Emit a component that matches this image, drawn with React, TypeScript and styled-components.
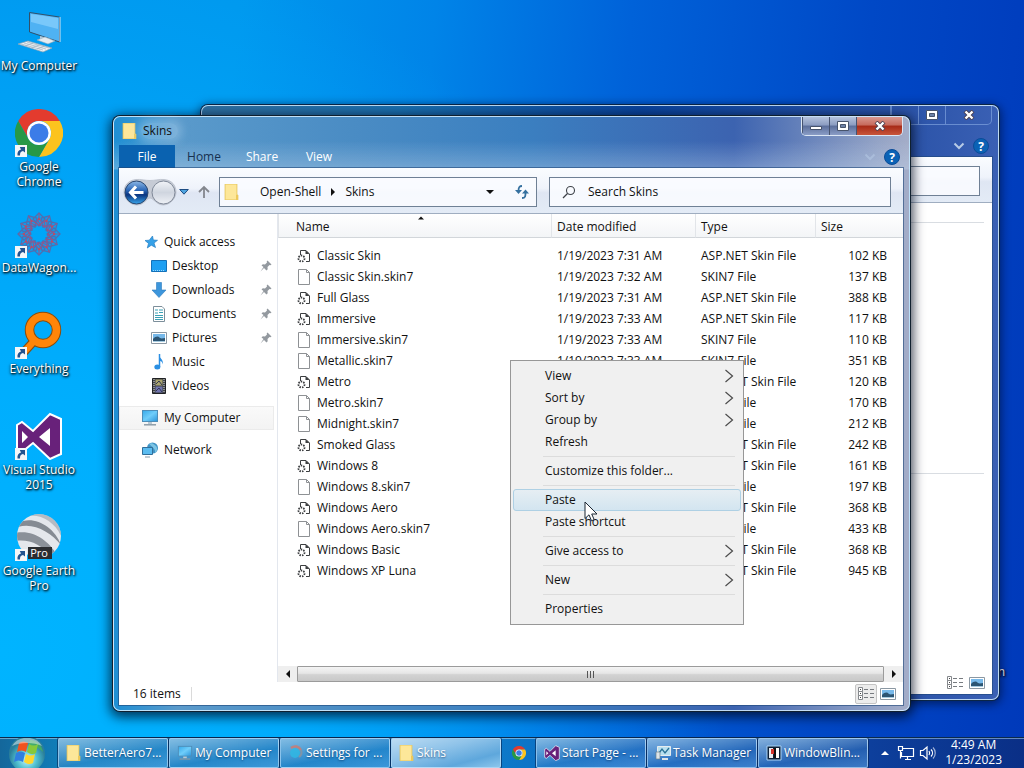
import * as React from "react";
import styled, { createGlobalStyle, css } from "styled-components";

const files = [
    ["Classic Skin", "1/19/2023 7:31 AM", "102 KB"],
    ["Classic Skin.skin7", "1/19/2023 7:32 AM", "137 KB"],
    ["Full Glass", "1/19/2023 7:31 AM", "388 KB"],
    ["Immersive", "1/19/2023 7:33 AM", "117 KB"],
    ["Immersive.skin7", "1/19/2023 7:33 AM", "110 KB"],
    ["Metallic.skin7", "1/19/2023 7:33 AM", "351 KB"],
    ["Metro", "1/19/2023 7:33 AM", "120 KB"],
    ["Metro.skin7", "1/19/2023 7:33 AM", "170 KB"],
    ["Midnight.skin7", "1/19/2023 7:33 AM", "212 KB"],
    ["Smoked Glass", "1/19/2023 7:33 AM", "242 KB"],
    ["Windows 8", "1/19/2023 7:33 AM", "161 KB"],
    ["Windows 8.skin7", "1/19/2023 7:33 AM", "197 KB"],
    ["Windows Aero", "1/19/2023 7:33 AM", "368 KB"],
    ["Windows Aero.skin7", "1/19/2023 7:33 AM", "433 KB"],
    ["Windows Basic", "1/19/2023 7:33 AM", "368 KB"],
    ["Windows XP Luna", "1/19/2023 7:33 AM", "945 KB"],
];

const menuGroups = [
    [["View", true], ["Sort by", true], ["Group by", true], ["Refresh", false]],
    [["Customize this folder...", false]],
    [["Paste", false], ["Paste shortcut", false]],
    [["Give access to", true]],
    [["New", true]],
    [["Properties", false]],
] as [string, boolean][][];

/* ---------- icons ---------- */

const FolderIcon = ({ size = 16 }) => (
    <svg width={size} height={size} viewBox="0 0 16 16">
        <path d="M1 0h12v11h1v5H1z" fill="#fbe28a" stroke="#e3c25c" strokeWidth=".7" />
        <path d="M2 1h10v14H2z" fill="#fde799" />
        <path d="M12 11h2v5h-2z" fill="#edc95a" />
    </svg>
);

const ComputerIcon = ({ size = 18 }) => (
    <svg width={size} height={size} viewBox="0 0 18 18">
        <defs>
            <linearGradient id="screen" x1="0" y1="0" x2="1" y2="1">
                <stop offset="0" stopColor="#35a9ea" />
                <stop offset=".5" stopColor="#6fcdfa" />
                <stop offset="1" stopColor="#2b94da" />
            </linearGradient>
        </defs>
        <rect x="1.500" y="1.500" width="15" height="11" fill="url(#screen)" stroke="#4d8db8" />
        <path d="M7 13h4v2H7z" fill="#b9c8d3" />
        <path d="M3 15.800h12" stroke="#8797a3" strokeWidth="1.400" />
    </svg>
);

const DesktopComputerIcon = () => (
    <svg width="48" height="48" viewBox="0 0 48 48">
        <path d="M14.500 4.500 44.500 9v25L14.500 24z" fill="#4fb2f3" stroke="#31506a" />
        <path d="M16 6 43 10v11L16 14z" fill="#83cdfb" opacity=".8" />
        <path d="M45 9v25" stroke="#d6e6f2" strokeWidth="1" />
        <path d="M25 28v4l8 3 3-4z" fill="#b8ccd9" />
        <path d="M22 32l8-3 10 4-7 3z" fill="#e5ecf1" stroke="#8ba6b9" strokeWidth=".6" />
        <path d="M3 36l10-3 24 7-9 4z" fill="#edf1f4" stroke="#8aa4b6" strokeWidth=".7" />
        <path d="M6 36l22 6M9 35l22 6M12 34l22 6M10 38l8-3M16 40l8-3M22 41l8-3" stroke="#9fb2c0" strokeWidth=".7" />
    </svg>
);

const ChromeIcon = ({ size = 48 }) => (
    <svg width={size} height={size} viewBox="0 0 48 48">
        <path d="M3.200 12A24 24 0 0 1 44.800 12H24A12 12 0 0 0 13.600 30z" fill="#e33b2e" />
        <path d="M44.800 12A24 24 0 0 1 24 48L34.400 30A12 12 0 0 0 24 12z" fill="#fcc31e" />
        <path d="M24 48A24 24 0 0 1 3.200 12L13.600 30A12 12 0 0 0 34.400 30z" fill="#279847" />
        <circle cx="24" cy="24" r="12" fill="#fff" />
        <circle cx="24" cy="24" r="9.500" fill="#3b7ce8" />
    </svg>
);

const DataWagonIcon = () => (
    <svg width="48" height="48" viewBox="0 0 48 48" fill="none">
        {[0, 30, 60, 90, 120, 150, 180, 210, 240, 270, 300, 330].map((a) => (
            <g key={a} transform={`rotate(${a} 24 24)`}>
                <path d="M24 16 18 9l6-6 6 6z" stroke="#4f6fb0" strokeWidth="1.300" />
                <path d="M19 17l5-9 5 9M24 3v5M14 12l8 4" stroke="#8a5a90" strokeWidth="1.200" />
                <circle cx="24" cy="9" r="1.200" fill="#b84c66" />
            </g>
        ))}
    </svg>
);

const EverythingIcon = () => (
    <svg width="48" height="48" viewBox="0 0 48 48" fill="none">
        <path d="M20 29 9 41" stroke="#8a4d0c" strokeWidth="9" />
        <circle cx="28" cy="19" r="13.500" stroke="#8a4d0c" strokeWidth="9.500" />
        <path d="M21 28 9 41" stroke="#ff8508" strokeWidth="6.500" />
        <circle cx="28" cy="19" r="13.500" stroke="#ff8508" strokeWidth="7.500" />
    </svg>
);

const VisualStudioIcon = ({ size = 48 }) => (
    <svg width={size} height={size} viewBox="0 0 48 48">
        <path
            d="M2 13 7 10l11 9L35 2l11 5v35l-11 5-17-16-11 9-5-3z"
            fill="#68217a"
            stroke="#fff"
            strokeWidth="2"
        />
        <path d="M7 19v12l6-6zM24 25l11-9v18z" fill="#fff" />
    </svg>
);

const EarthIcon = () => (
    <svg width="48" height="48" viewBox="0 0 48 48">
        <defs>
            <clipPath id="globe"><circle cx="24" cy="23" r="22" /></clipPath>
        </defs>
        <g clipPath="url(#globe)">
            <path d="M0 0h48v48H0z" fill="#e4e7ec" />
            <path d="M8 5C22-2 42 8 48 28V14C42 4 30-2 14 0z" fill="#9a9fa6" opacity=".6" />
            <path d="M3 10C18 2 39 13 46 32 36 19 18 9 3 14z" fill="#858b93" />
            <path d="M0 20C18 16 34 28 42 42l-6 3C27 31 14 26 0 28z" fill="#8b9199" />
        </g>
        <path d="M13 34h24v12H13z" fill="#2b2d31" />
        <text x="24" y="44" fill="#fff" fontSize="11" textAnchor="middle" fontFamily="Open Sans, sans-serif">Pro</text>
    </svg>
);

const ShortcutArrow = () => (
    <svg width="12" height="12" viewBox="0 0 12 12">
        <path d="M0 0h12v12H0z" fill="#f4f6f8" />
        <path d="M2.500 10.500C2 7 3.500 4.800 6 4.400L4.800 2H10v5.500L8 6C6 6.300 4.800 7.800 5 10.500z" fill="#23538f" />
    </svg>
);

const StarIcon = () => (
    <svg width="16" height="16" viewBox="0 0 16 16">
        <path d="M9.500 2l.8 4 4.200.3-3.500 2.700 1.500 4.500-4.200-2.300-4 2.800 1.200-4.600L2 6.500l4.300-.3z" fill="#35a1e8" stroke="#2680c4" strokeWidth=".7" />
    </svg>
);

const DesktopIcon = () => (
    <svg width="16" height="16" viewBox="0 0 16 16">
        <path d="M.5 2.500h15v11H.5z" fill="#1d9ff2" stroke="#1471b8" />
        <path d="M2 12.500h12" stroke="#9fd6fa" strokeDasharray="1 1" />
    </svg>
);

const DownloadIcon = () => (
    <svg width="16" height="16" viewBox="0 0 16 16">
        <path d="M5.500.5h5V8H15L8 15.500 1 8h4.500z" fill="#3d96dc" stroke="#2c7bbd" strokeWidth=".6" />
    </svg>
);

const DocumentIcon = () => (
    <svg width="16" height="16" viewBox="0 0 16 16">
        <path d="M2.500.5h8.500l2.500 2.500v12.500h-11z" fill="#fff" stroke="#7d8f9b" />
        <path d="M4 4h3M4 7h3M8 4h4M8 6.500h4M4 9.500h8M4 11.500h8M4 13.500h8" stroke="#3ba0b5" />
    </svg>
);

const PictureIcon = () => (
    <svg width="16" height="14" viewBox="0 0 16 14">
        <path d="M.5 1.500h15v11H.5z" fill="#fff" stroke="#8b98a3" />
        <path d="M2 3h12v8H2z" fill="#77b9ea" />
        <path d="M2 8c3-3 5-3 7-1 2 1 3 0 5 0v4H2z" fill="#2c5573" />
        <path d="M2 10h12v1H2z" fill="#a6cbe0" />
    </svg>
);

const MusicIcon = () => (
    <svg width="16" height="16" viewBox="0 0 16 16">
        <path d="M8 1c0 3 4.500 4 4 9.500C11.500 8 10 7 9 7v6" fill="#2b8fe3" />
        <path d="M8.500 0v13" stroke="#2b8fe3" strokeWidth="1.500" />
        <ellipse cx="6.300" cy="13" rx="3" ry="2.500" fill="#2b8fe3" />
    </svg>
);

const VideoIcon = () => (
    <svg width="16" height="16" viewBox="0 0 16 16">
        <path d="M1.500.5h13v15h-13z" fill="#3f4247" stroke="#1f2124" />
        <path d="M4.500 1.500h7v6h-7z" fill="#a8a36e" />
        <path d="M4.500 8.500h7v6h-7z" fill="#6f73ad" />
        <path d="M5 6l3-3 3 4M5 13l3-3 3 4" stroke="#303550" fill="none" />
        <path d="M3 1v14M13 1v14" stroke="#d8dade" strokeDasharray="1 1" />
    </svg>
);

const NetworkIcon = () => (
    <svg width="18" height="18" viewBox="0 0 18 18">
        <circle cx="11.500" cy="7" r="5.500" fill="#3f93c5" />
        <path d="M8 3c3-2 5 0 7 2s1 6-1 7c1-4-3-6-6-9z" fill="#7cc4e4" />
        <path d="M1.500 6.500h10v7h-10z" fill="#5bbcf0" stroke="#316f9a" />
        <path d="M4 16h5" stroke="#8499a8" />
    </svg>
);

const PinIcon = () => (
    <svg width="12" height="12" viewBox="0 0 12 12">
        <path d="M7.500.5l4 4-1 .8-1-.3-2 2 .2 2.200-1.200 1.300L4 8 .5 11.500 3.500 7 1.500 5.500l1.300-1.200 2.200.2 2-2-.3-1z" fill="#93999f" />
    </svg>
);

const BlankFileIcon = () => (
    <svg width="14" height="16" viewBox="0 0 14 16">
        <path d="M1.500.5h8l3 3v12h-11z" fill="#fff" stroke="#8e9194" />
        <path d="M9.500.5v3h3" fill="none" stroke="#8e9194" />
    </svg>
);

const SkinFileIcon = () => (
    <svg width="14" height="14" viewBox="0 0 14 14" fill="none">
        <path d="M3.500 6V1.500H9l3.500 3.500v7.500H9" stroke="#3c3e40" />
        <path d="M8.500 1l4 4h-4z" fill="#3c3e40" />
        <circle cx="4.500" cy="9.500" r="3" stroke="#3c3e40" strokeWidth="1.800" strokeDasharray="1.500 1.100" />
    </svg>
);

const ChevronRight = () => (
    <svg width="10" height="14" viewBox="0 0 10 14" fill="none">
        <path d="M1.500 1 8.500 7l-7 6" stroke="#4b4b4b" strokeWidth="1.200" />
    </svg>
);

const ChevronDown = ({ faint = false }) => (
    <svg width="12" height="8" viewBox="0 0 12 8" fill="none" opacity={faint ? 0.55 : 1}>
        <path d="M1.500 1.500 6 6l4.500-4.500" stroke="#b7cbe6" strokeWidth="2" />
    </svg>
);

const BackIcon = () => (
    <svg width="54" height="28" viewBox="0 0 54 28">
        <defs>
            <linearGradient id="back" x1="0" y1="0" x2="0" y2="1">
                <stop offset="0" stopColor="#8db8e6" />
                <stop offset=".4" stopColor="#2c68b8" />
                <stop offset=".6" stopColor="#0b3580" />
                <stop offset="1" stopColor="#39a6ec" />
            </linearGradient>
            <linearGradient id="forward" x1="0" y1="0" x2="0" y2="1">
                <stop offset="0" stopColor="#f2f4f8" />
                <stop offset=".5" stopColor="#cfd5df" />
                <stop offset="1" stopColor="#eef1f6" />
            </linearGradient>
        </defs>
        <path d="M13 1.500C18 1 22 2.500 27 2.500s9-1.500 14-1c8 .5 12 6 12 12.500s-6 13-13 13c-6 0-10-7-13-7s-6 7-13 7S1 21 1 14 6 2 13 1.500z" fill="#c6cbd5" stroke="#b4bac6" strokeWidth=".7" />
        <circle cx="13.500" cy="14.500" r="11.500" fill="url(#back)" stroke="#29466f" />
        <path d="M13 8.500l-5.500 6 5.500 6M8 14.500h12.500" stroke="#fff" strokeWidth="3" fill="none" />
        <circle cx="40.500" cy="14.500" r="11.500" fill="url(#forward)" stroke="#7e8797" />
    </svg>
);

const UpArrow = () => (
    <svg width="12" height="14" viewBox="0 0 12 14" fill="none">
        <path d="M6 13V2M1 7l5-5 5 5" stroke="#83868d" strokeWidth="1.800" />
    </svg>
);

const Triangle = ({ fill = "#111", dir = "down" }) => {
    const paths = { down: "M0 2h8L4 6z", up: "M0 6h8L4 2z", right: "M2 0v8l4-4z", left: "M6 0v8L2 4z" };
    return (
        <svg width="8" height="8" viewBox="0 0 8 8">
            <path d={paths[dir]} fill={fill} />
        </svg>
    );
};

const SortArrow = () => (
    <svg width="6" height="4" viewBox="0 0 6 4">
        <path d="M0 3.500h6L3 .5z" fill="#111" />
    </svg>
);

const HistoryArrow = () => (
    <svg width="10" height="6" viewBox="0 0 10 6">
        <path d="M.7.5h8.600L5 5.200z" fill="#4ea5e0" stroke="#1d4c83" />
    </svg>
);

const RefreshIcon = () => (
    <svg width="16" height="16" viewBox="0 0 16 16" fill="none">
        <path d="M8 2C5 2 4.500 4 4.500 7M8 14c3.500 0 3.500-2 3.500-5" stroke="#35709f" strokeWidth="1.800" />
        <path d="M1 6h7l-3.500 4zM8 9.500h7L11.500 5.500z" fill="#35709f" />
    </svg>
);

const SearchIcon = () => (
    <svg width="14" height="14" viewBox="0 0 14 14" fill="none">
        <circle cx="8.500" cy="5.500" r="4" stroke="#3d4148" strokeWidth="1.100" />
        <path d="M5.500 8.500 1 13" stroke="#3d4148" strokeWidth="1.200" />
    </svg>
);

const HelpIcon = () => (
    <svg width="16" height="16" viewBox="0 0 16 16">
        <circle cx="8" cy="8" r="7.500" fill="#0b62b5" stroke="#0b4c98" />
        <text x="8" y="12.500" fill="#fff" fontSize="12" fontWeight="700" textAnchor="middle" fontFamily="Open Sans, sans-serif">?</text>
    </svg>
);

const MinimizeGlyph = () => (
    <svg width="12" height="10" viewBox="0 0 12 10">
        <path d="M.5 5.500h11v3H.5z" fill="#fff" stroke="#47536b" />
    </svg>
);

const MaximizeGlyph = () => (
    <svg width="12" height="10" viewBox="0 0 12 10">
        <path d="M.5.5h11v9H.5z" fill="#fff" stroke="#47536b" />
        <path d="M3.500 3.500h5v3h-5z" fill="#6d82a6" stroke="#47536b" />
    </svg>
);

const CloseGlyph = () => (
    <svg width="12" height="10" viewBox="0 0 12 10" fill="none">
        <path d="M2 1l8 8M10 1 2 9" stroke="#4c4050" strokeWidth="4" />
        <path d="M2.500 1.500l7 7M9.500 1.500l-7 7" stroke="#fff" strokeWidth="2.400" />
    </svg>
);

const DetailsViewIcon = () => (
    <svg width="16" height="14" viewBox="0 0 16 14" fill="none">
        <path d="M.5.500h4v4h-4zM.5 4.500h4v4h-4zM.5 8.500h4v4h-4z" fill="#fff" stroke="#85888c" />
        <path d="M2 2.500h1M2 6.500h1M2 10.500h1" stroke="#444" />
        <path d="M6 2.500h10M6 6.500h10M6 10.500h10" stroke="#777b80" strokeDasharray="4 2" />
    </svg>
);

const StartOrb = () => (
    <svg width="38" height="30" viewBox="0 0 38 30">
        <defs>
            <radialGradient id="orb" cx=".5" cy=".65" r=".5">
                <stop offset="0" stopColor="#c9f7ff" />
                <stop offset=".55" stopColor="#4fc0d0" />
                <stop offset="1" stopColor="#2b7f9a" />
            </radialGradient>
        </defs>
        <circle cx="19" cy="16" r="18" fill="url(#orb)" />
        <path d="M22 2c8 0 12 6 13 12-5-5-9-6-14-6z" fill="#4cc24a" opacity=".6" />
        <path d="M11 5c3-2 6-2 9 0l-2 9c-3-2-6-2-9 0z" fill="#f0521f" />
        <path d="M21 6c3 2 6 2 9 0l-2 9c-3 2-6 1-9-1z" fill="#86c93a" />
        <path d="M8 15c3-2 6-2 9 0l-2 9c-3-2-6-2-9 0z" fill="#2f7fe0" />
        <path d="M18 16c3 2 6 2 9 0l-2 9c-3 2-6 1-9-1z" fill="#ffd62e" />
        <path d="M4 8C10-3 28-3 34 8c-8-4-22-4-30 0z" fill="#fff" opacity=".45" />
    </svg>
);

const SettingsTaskIcon = () => (
    <svg width="16" height="16" viewBox="0 0 16 16" fill="none" opacity=".85">
        <circle cx="7" cy="8" r="5" fill="#2fb8e4" />
        <path d="M3 3a6.500 6.500 0 0 1 10 2" stroke="#cc7c73" strokeWidth="2.500" />
        <path d="M13 5a6 6 0 0 1-2 7" stroke="#8a93a0" strokeWidth="2" />
    </svg>
);

const TaskManagerIcon = () => (
    <svg width="16" height="16" viewBox="0 0 16 16" fill="none">
        <path d="M2.500 1.500h13v9h-13z" fill="#b9e0f0" stroke="#e6ecef" />
        <path d="M4 8l3-4 3 4 4-5" stroke="#2b7297" strokeWidth="1.300" />
        <path d="M1 7h4v7H1z" fill="#dfe5e8" stroke="#6c7f8b" strokeWidth=".7" />
        <path d="M7 14h6" stroke="#dfe5e8" strokeWidth="2" />
    </svg>
);

const WindowBlindsIcon = () => (
    <svg width="16" height="16" viewBox="0 0 16 16">
        <path d="M1 1h14v14H1z" fill="#0d2038" stroke="#a9d2f5" />
        <path d="M3 3h4v10H3z" fill="#e7edf2" />
        <path d="M5 4h3v5H5z" fill="#d2342d" />
        <path d="M9 3h4v10H9z" fill="#fff" />
        <path d="M8 3h2v10H8z" fill="#111" />
    </svg>
);

const NetworkTrayIcon = () => (
    <svg width="18" height="16" viewBox="0 0 18 16" fill="none">
        <path d="M6 3.500h10.500v8H4.500V7M8 14.500h6M10.500 11.500v3M1.500 1.500h4v4h-4zM3.500 5.500v8" stroke="#fff" strokeWidth="1.200" />
    </svg>
);

const SpeakerIcon = () => (
    <svg width="18" height="16" viewBox="0 0 18 16" fill="none" stroke="#fff" strokeWidth="1.200">
        <path d="M1.500 5.500h2.500L8 2v12L4 10.500H1.500z" />
        <path d="M10 6c1 1.500 1 2.500 0 4M12 4.500c2 2 2 5 0 7" />
        <path d="M14 2.500c3 3 3 8 0 11" opacity=".6" />
    </svg>
);

const CursorIcon = () => (
    <svg width="14" height="22" viewBox="0 0 14 22">
        <path d="M1 1v16.500l4-3.700 2.500 6 2.700-1.200L7.700 13H13z" fill="#fff" stroke="#1b2733" />
    </svg>
);

/* ---------- page ---------- */

const desktopItems = [
    { label: "My Computer", icon: <DesktopComputerIcon /> },
    { label: "Google Chrome", icon: <ChromeIcon />, shortcut: true },
    { label: "DataWagon...", icon: <DataWagonIcon />, shortcut: true },
    { label: "Everything", icon: <EverythingIcon />, shortcut: true },
    { label: "Visual Studio 2015", icon: <VisualStudioIcon />, shortcut: true },
    { label: "Google Earth Pro", icon: <EarthIcon />, shortcut: true },
];

const places = [
    { label: "Desktop", icon: <DesktopIcon />, pinned: true },
    { label: "Downloads", icon: <DownloadIcon />, pinned: true },
    { label: "Documents", icon: <DocumentIcon />, pinned: true },
    { label: "Pictures", icon: <PictureIcon />, pinned: true },
    { label: "Music", icon: <MusicIcon /> },
    { label: "Videos", icon: <VideoIcon /> },
];

const WindowButtons = ({ ghost = false }) => (
    <CaptionButtons $ghost={ghost}>
        <CaptionButton $ghost={ghost} aria-label="Minimize">{!ghost && <MinimizeGlyph />}</CaptionButton>
        <CaptionButton $ghost={ghost} aria-label="Maximize"><MaximizeGlyph /></CaptionButton>
        <CaptionButton $ghost={ghost} $close aria-label="Close"><CloseGlyph /></CaptionButton>
    </CaptionButtons>
);

const BackgroundWindow = () => (
    <BackWindow>
        <TitleBar><WindowButtons ghost /></TitleBar>
        <RibbonTabs>
            <RibbonTools><ChevronDown /><HelpIcon /></RibbonTools>
        </RibbonTabs>
        <Client>
            <NavBar><Spacer /><EmptyField /></NavBar>
            <BackBody><BackLine /><BackLine /></BackBody>
            <StatusBar>
                <ViewButtons>
                    <ViewButton aria-label="Details"><DetailsViewIcon /></ViewButton>
                    <ViewButton aria-label="Thumbnails"><PictureIcon /></ViewButton>
                </ViewButtons>
            </StatusBar>
        </Client>
    </BackWindow>
);

const Explorer = () => (
    <FrontWindow>
        <TitleBar>
            <Title><FolderIcon /><TitleText>Skins</TitleText></Title>
            <WindowButtons />
        </TitleBar>
        <RibbonTabs>
            <RibbonTab $file>File</RibbonTab>
            <RibbonTab $dark>Home</RibbonTab>
            <RibbonTab>Share</RibbonTab>
            <RibbonTab>View</RibbonTab>
            <RibbonTools><ChevronDown faint /><HelpIcon /></RibbonTools>
        </RibbonTabs>
        <Client>
            <NavBar>
                <NavGroup>
                    <NavButton aria-label="Back"><BackIcon /></NavButton>
                    <NavButton aria-label="Recent locations"><HistoryArrow /></NavButton>
                </NavGroup>
                <NavButton aria-label="Up"><UpArrow /></NavButton>
                <AddressBar>
                    <FolderIcon />
                    <Crumbs>
                        <Crumb href="#open-shell">Open-Shell</Crumb>
                        <Triangle dir="right" />
                        <Crumb href="#skins">Skins</Crumb>
                    </Crumbs>
                    <Triangle />
                    <NavButton aria-label="Refresh"><RefreshIcon /></NavButton>
                </AddressBar>
                <SearchBox>
                    <SearchIcon />
                    <SearchInput aria-label="Search Skins" placeholder="Search Skins" />
                </SearchBox>
            </NavBar>
            <Panes>
                <Sidebar>
                    <Place href="#quick"><StarIcon />Quick access</Place>
                    {places.map((p) => (
                        <Place key={p.label} href={"#" + p.label} $nested>
                            {p.icon}{p.label}
                            {p.pinned && <Pin><PinIcon /></Pin>}
                        </Place>
                    ))}
                    <Place href="#computer" $device $selected><ComputerIcon />My Computer</Place>
                    <Place href="#network" $device><NetworkIcon />Network</Place>
                </Sidebar>
                <ListPane>
                    <FileScroll>
                        <FileTable>
                            <colgroup>
                                <col /><Col $w={144} /><Col $w={120} /><Col $w={88} />
                            </colgroup>
                            <thead>
                                <tr>
                                    <HeadCell $first>Name<SortMark><SortArrow /></SortMark></HeadCell>
                                    <HeadCell>Date modified</HeadCell>
                                    <HeadCell>Type</HeadCell>
                                    <HeadCell>Size</HeadCell>
                                </tr>
                            </thead>
                            <tbody>
                                {files.map(([name, date, size]) => {
                                    const plain = name.endsWith(".skin7");
                                    return (
                                        <FileRow key={name}>
                                            <Cell>
                                                <FileName>{plain ? <BlankFileIcon /> : <SkinFileIcon />}{name}</FileName>
                                            </Cell>
                                            <Cell>{date}</Cell>
                                            <Cell>{plain ? "SKIN7 File" : "ASP.NET Skin File"}</Cell>
                                            <Cell $right>{size}</Cell>
                                        </FileRow>
                                    );
                                })}
                            </tbody>
                        </FileTable>
                    </FileScroll>
                    <ScrollBar>
                        <ScrollArrow aria-label="Scroll left"><Triangle dir="left" /></ScrollArrow>
                        <ScrollThumb><i /><i /><i /></ScrollThumb>
                        <ScrollArrow aria-label="Scroll right"><Triangle dir="right" /></ScrollArrow>
                    </ScrollBar>
                </ListPane>
            </Panes>
            <StatusBar>
                <ItemCount>16 items</ItemCount>
                <ViewButtons>
                    <ViewButton $active aria-label="Details"><DetailsViewIcon /></ViewButton>
                    <ViewButton aria-label="Thumbnails"><PictureIcon /></ViewButton>
                </ViewButtons>
            </StatusBar>
        </Client>
    </FrontWindow>
);

const App = () => (
    <Screen>
        <GlobalStyle />
        <Desktop>
            <IconColumn>
                {desktopItems.map((d) => (
                    <Shortcut key={d.label}>
                        <ShortcutImage>
                            {d.icon}
                            {d.shortcut && <ShortcutBadge><ShortcutArrow /></ShortcutBadge>}
                        </ShortcutImage>
                        <ShortcutLabel>{d.label}</ShortcutLabel>
                    </Shortcut>
                ))}
            </IconColumn>
            <ClippedLabel>n</ClippedLabel>
            <BackgroundWindow />
            <Explorer />
            <ContextMenu>
                {menuGroups.map((group, i) => (
                    <MenuGroup key={i}>
                        {group.map(([label, sub]) => (
                            <MenuItem key={label} $hot={label === "Paste"}>
                                {label}
                                {sub && <ChevronRight />}
                            </MenuItem>
                        ))}
                    </MenuGroup>
                ))}
            </ContextMenu>
            <Cursor><CursorIcon /></Cursor>
        </Desktop>
        <Taskbar>
            <StartButton aria-label="Start"><StartOrb /></StartButton>
            <TaskButton><FolderIcon />BetterAero7...</TaskButton>
            <TaskButton><ComputerIcon size={16} />My Computer</TaskButton>
            <TaskButton><SettingsTaskIcon />Settings for ...</TaskButton>
            <TaskButton $active><FolderIcon />Skins</TaskButton>
            <PinnedTask aria-label="Google Chrome"><ChromeIcon size={14} /></PinnedTask>
            <TaskButton><VisualStudioIcon size={16} />Start Page - ...</TaskButton>
            <TaskButton><TaskManagerIcon />Task Manager</TaskButton>
            <TaskButton><WindowBlindsIcon />WindowBlin...</TaskButton>
            <Tray>
                <Triangle dir="up" fill="#fff" />
                <TrayIcons><NetworkTrayIcon /><SpeakerIcon /></TrayIcons>
                <Clock><span>4:49 AM</span><span>1/23/2023</span></Clock>
            </Tray>
        </Taskbar>
    </Screen>
);

const GlobalStyle = createGlobalStyle`
  * {
    box-sizing: border-box;
  }
  body {
    margin: 0;
    font: 12px/16px "Open Sans", "Noto Sans", sans-serif;
    color: #111;
  }
  button {
    font: inherit;
    color: inherit;
    border: 0;
    padding: 0;
    background: none;
  }
  a {
    color: inherit;
    text-decoration: none;
  }
  svg {
    display: block;
    flex: none;
  }
`;

const Screen = styled.div`
  height: 100vh;
  display: flex;
  flex-direction: column;
  overflow: hidden;
  background:
    radial-gradient(circle at 0% 85%, #00b4ff 0%, rgba(0, 176, 255, 0.9) 22%, rgba(0, 150, 245, 0) 60%),
    linear-gradient(95deg, #0098ef 0%, #0098ee 22%, #0084e8 40%, #0062d9 58%, #0048c6 80%, #0039ba 100%);
`;

const Desktop = styled.main`
  position: relative;
  flex: 1;
  min-height: 0;
`;

const IconColumn = styled.div`
  width: 78px;
  padding-top: 8px;
  display: grid;
  grid-auto-rows: 101px;
`;

const Shortcut = styled.div`
  display: flex;
  flex-direction: column;
  align-items: center;
  gap: 2px;
`;

const ShortcutImage = styled.div`
  position: relative;
`;

const ShortcutBadge = styled.span`
  position: absolute;
  left: 0;
  bottom: 0;
`;

const ShortcutLabel = styled.span`
  color: #fff;
  line-height: 15px;
  text-align: center;
  text-shadow: 1px 1px 2px #000, 0 1px 3px rgba(0, 0, 0, 0.8);
`;

const ClippedLabel = styled(ShortcutLabel)`
  position: absolute;
  right: 19px;
  bottom: 58px;
`;

const glass = css`
  position: absolute;
  display: flex;
  flex-direction: column;
  padding: 0 6px 5px 5px;
  border: 1px solid rgba(215, 238, 255, 0.85);
  border-radius: 7px;
`;

const BackWindow = styled.section`
  ${glass}
  inset: 105px 25px 37px 201px;
  background: linear-gradient(90deg, #2f6f9f 0%, #1a6fae 25%, #0a449c 55%, #2d55aa 90%, #3a60b4 100%);
  box-shadow: 0 0 0 1px #0b2545, 0 2px 10px 2px rgba(0, 10, 40, 0.6);
`;

const FrontWindow = styled.section`
  ${glass}
  inset: 116px 114px 26px 113px;
  background:
    linear-gradient(180deg, rgba(255, 255, 255, 0) 0, rgba(255, 255, 255, 0) 24px, rgba(200, 220, 240, 0.35) 52px, rgba(255, 255, 255, 0) 53px),
    linear-gradient(90deg, #1e8fd4 0%, #5a9acb 8%, #4a8cc4 30%, #3b7fc0 52%, #3c63b0 78%, #93a3c6 96%, #a4adc8 100%);
  box-shadow: 0 0 0 1px #10202f, 0 3px 12px 3px rgba(0, 10, 30, 0.75);
`;

const TitleBar = styled.header`
  height: 28px;
  display: flex;
`;

const Title = styled.div`
  display: flex;
  align-items: center;
  gap: 3px;
  padding-left: 3px;
`;

const TitleText = styled.span`
  padding: 0 6px 0 2px;
  border-radius: 8px;
  background: rgba(190, 222, 244, 0.35);
  box-shadow: 0 0 8px 4px rgba(190, 222, 244, 0.35);
`;

const CaptionButtons = styled.div<{ $ghost: boolean }>`
  margin-left: auto;
  display: flex;
  height: 19px;
  border: 1px solid ${(p) => (p.$ghost ? "rgba(140, 175, 230, 0.6)" : "#dbe6f4")};
  border-top: 0;
  border-radius: 0 0 5px 5px;
  overflow: hidden;
`;

const CaptionButton = styled.button<{ $ghost: boolean; $close?: boolean }>`
  width: ${(p) => (p.$close ? 46 : 27)}px;
  display: flex;
  align-items: center;
  justify-content: center;
  border-left: ${(p) => (p.$ghost ? "1px solid rgba(140, 175, 230, 0.6)" : "1px solid #46536f")};
  background: ${(p) =>
        p.$ghost
            ? "transparent"
            : p.$close
                ? "linear-gradient(#d9988f 0%, #c66a5c 45%, #a72a17 50%, #c8553a 100%)"
                : "linear-gradient(#b4c2dc 0%, #8b9cc1 45%, #5b6e9b 50%, #8a9dc6 100%)"};
`;

const RibbonTabs = styled.nav`
  height: 23px;
  display: flex;
  align-items: center;
`;

const RibbonTab = styled.button<{ $file?: boolean; $dark?: boolean }>`
  width: 56px;
  height: 23px;
  margin-right: ${(p) => (p.$dark ? 2 : 1)}px;
  color: ${(p) => (p.$dark ? "#16304f" : "#fff")};
  background: ${(p) => (p.$file ? "#0a62b0" : "none")};
`;

const RibbonTools = styled.div`
  margin-left: auto;
  padding-right: 3px;
  display: flex;
  align-items: center;
  gap: 8px;
`;

const Client = styled.div`
  flex: 1;
  min-height: 0;
  display: flex;
  flex-direction: column;
  background: #fff;
  box-shadow: 0 0 0 1px rgba(30, 70, 120, 0.6);
`;

const NavBar = styled.div`
  flex: none;
  height: 46px;
  padding: 2px 12px 0 4px;
  display: flex;
  align-items: center;
  gap: 9px;
  background: linear-gradient(#fafcff 0%, #eff3fb 45%, #dfe6f3 55%, #e3ebf6 100%);
  border-bottom: 1px solid #9fadc0;
`;

const NavGroup = styled.div`
  flex: none;
  display: flex;
  align-items: center;
  gap: 2px;
`;

const NavButton = styled.button`
  flex: none;
`;

const Field = css`
  height: 30px;
  display: flex;
  align-items: center;
  background: rgba(250, 252, 255, 0.85);
  border: 1px solid #6f8095;
`;

const AddressBar = styled.div`
  ${Field}
  flex: 306;
  padding: 0 6px 0 4px;
  gap: 20px;
`;

const Crumbs = styled.div`
  flex: 1;
  display: flex;
  align-items: center;
  gap: 8px;
`;

const Crumb = styled.a``;

const SearchBox = styled.div`
  ${Field}
  flex: 316;
  margin-left: 3px;
  padding: 0 12px;
  gap: 12px;
`;

const SearchInput = styled.input`
  flex: 1;
  min-width: 0;
  border: 0;
  padding: 0;
  outline: 0;
  font: inherit;
  background: none;

  &::placeholder {
    color: #111;
  }
`;

const Spacer = styled.div`
  flex: 1;
`;

const EmptyField = styled.div`
  ${Field}
  flex: 1;
`;

const BackBody = styled.div`
  flex: 1;
  padding: 19px 8px 0 0;
  display: flex;
  flex-direction: column;
  gap: 250px;
`;

const BackLine = styled.div`
  height: 1px;
  background: #d9dde2;
`;

const Panes = styled.div`
  flex: 1;
  min-height: 0;
  display: flex;
`;

const Sidebar = styled.aside`
  width: 159px;
  padding-top: 16px;
  border-right: 1px solid #e3e7ee;
`;

const Place = styled.a<{ $nested?: boolean; $device?: boolean; $selected?: boolean }>`
  height: 24px;
  margin: ${(p) => (p.$selected ? "8px 3px 8px 0" : "0 3px 0 0")};
  padding: 0 2px 0 ${(p) => (p.$nested ? 32 : p.$device ? 22 : 24)}px;
  display: flex;
  align-items: center;
  gap: 5px;
  ${(p) =>
        p.$selected &&
        css`
      background: linear-gradient(#fafafa, #f3f3f3);
      box-shadow: inset 0 0 0 1px #ebebeb;
    `}
`;

const Pin = styled.span`
  margin-left: auto;
`;

const ListPane = styled.div`
  flex: 1;
  min-width: 0;
  display: flex;
  flex-direction: column;
`;

const FileScroll = styled.div`
  flex: 1;
  min-height: 0;
  overflow: hidden;
`;

const FileTable = styled.table`
  width: 100%;
  table-layout: fixed;
  border-collapse: separate;
  border-spacing: 0;

  thead::after {
    content: "";
    display: block;
    height: 7px;
  }
`;

const Col = styled.col<{ $w: number }>`
  width: ${(p) => p.$w}px;
`;

const HeadCell = styled.th<{ $first?: boolean }>`
  position: relative;
  height: 24px;
  padding: 2px 0 0 ${(p) => (p.$first ? 17 : 5)}px;
  font-weight: 400;
  text-align: left;
  background: linear-gradient(#fff, #f3f5f7);
  border-left: 1px solid #e2e5e9;
  border-bottom: 1px solid #d2d6da;
`;

const SortMark = styled.span`
  position: absolute;
  top: 2px;
  left: 51%;
`;

const FileRow = styled.tr`
  height: 21px;
`;

const Cell = styled.td<{ $right?: boolean }>`
  padding: 0 ${(p) => (p.$right ? 16 : 0)}px 0 6px;
  text-align: ${(p) => (p.$right ? "right" : "left")};
  white-space: nowrap;
`;

const FileName = styled.span`
  display: flex;
  align-items: center;
  gap: 6px;
  padding-left: 13px;
`;

const ScrollBar = styled.div`
  height: 16px;
  display: flex;
  background: #efefef;
`;

const ScrollArrow = styled.button`
  width: 19px;
  display: flex;
  align-items: center;
  justify-content: center;
`;

const ScrollThumb = styled.div`
  flex: 1;
  display: flex;
  align-items: center;
  justify-content: center;
  gap: 2px;
  border: 1px solid #9b9b9b;
  border-radius: 1px;
  background: linear-gradient(#f4f4f4 0%, #e6e6e6 45%, #d2d2d2 55%, #c8c8c8 100%);

  i {
    width: 1px;
    height: 7px;
    background: #555;
  }
`;

const StatusBar = styled.footer`
  height: 23px;
  padding-top: 1px;
  display: flex;
  align-items: center;
`;

const ItemCount = styled.span`
  margin-left: 14px;
  padding-right: 10px;
  border-right: 1px solid #dadada;
  line-height: 14px;
`;

const ViewButtons = styled.div`
  margin-left: auto;
  display: flex;
  align-items: center;
  padding-right: 4px;
`;

const ViewButton = styled.button<{ $active?: boolean }>`
  width: 22px;
  height: 20px;
  display: flex;
  align-items: center;
  justify-content: center;
  border-radius: 2px;
  ${(p) =>
        p.$active &&
        css`
      background: #ececec;
      border: 1px solid #c4c4c4;
    `}
`;

const ContextMenu = styled.div`
  position: absolute;
  left: 510px;
  top: 360px;
  width: 234px;
  padding: 4px 2px;
  background: #f0f0f0;
  border: 1px solid #979797;
`;

const MenuGroup = styled.div`
  & + &::before {
    content: "";
    display: block;
    height: 1px;
    margin: 3px 6px 3px 30px;
    background: #dcdcdc;
  }
`;

const MenuItem = styled.button<{ $hot: boolean }>`
  width: 100%;
  height: 22px;
  padding: 0 6px 0 31px;
  display: flex;
  align-items: center;
  justify-content: space-between;
  border: 1px solid ${(p) => (p.$hot ? "#aed0e4" : "transparent")};
  border-radius: 3px;
  background: ${(p) => (p.$hot ? "linear-gradient(#e6eef3, #d3e5f0)" : "none")};
`;

const Cursor = styled.span`
  position: absolute;
  left: 584px;
  top: 501px;
`;

const Taskbar = styled.footer`
  flex: none;
  height: 31px;
  display: flex;
  gap: 1px;
  padding-left: 8px;
  border-top: 1px solid #0b2a4c;
  background: linear-gradient(90deg, #14679b 0%, #0f86c4 8%, #0c80cc 45%, #0f5cbc 65%, #0d3f9c 85%, #0a2f86 100%);
  box-shadow: inset 0 1px 0 rgba(190, 225, 250, 0.5);
`;

const StartButton = styled.button`
  width: 49px;
`;

const TaskButton = styled.button<{ $active?: boolean }>`
  flex: 0 1 110px;
  min-width: 0;
  display: flex;
  align-items: center;
  gap: 2px;
  padding-left: 7px;
  color: #fff;
  white-space: nowrap;
  text-shadow: 0 1px 2px rgba(0, 30, 70, 0.6);
  border: 1px solid rgba(190, 225, 250, 0.65);
  border-radius: 2px;
  box-shadow: 0 0 0 1px rgba(5, 35, 80, 0.6);
  background: ${(p) =>
        p.$active
            ? "linear-gradient(165deg, #bcdcf3 0%, #8fc3e9 40%, #5ea7dc 75%, #8cc6ec 100%)"
            : "linear-gradient(170deg, rgba(170, 208, 236, 0.75) 0%, rgba(110, 165, 215, 0.5) 45%, rgba(70, 140, 205, 0.4) 60%, rgba(100, 170, 230, 0.55) 100%)"};
`;

const PinnedTask = styled.button`
  width: 33px;
  display: flex;
  align-items: center;
  justify-content: center;
`;

const Tray = styled.div`
  margin-left: auto;
  padding-right: 22px;
  display: flex;
  align-items: center;
  gap: 8px;
  color: #fff;
`;

const TrayIcons = styled.div`
  display: flex;
  gap: 4px;
`;

const Clock = styled.div`
  display: flex;
  flex-direction: column;
  padding-bottom: 2px;
  text-align: center;
  line-height: 15px;
`;

export default App;
